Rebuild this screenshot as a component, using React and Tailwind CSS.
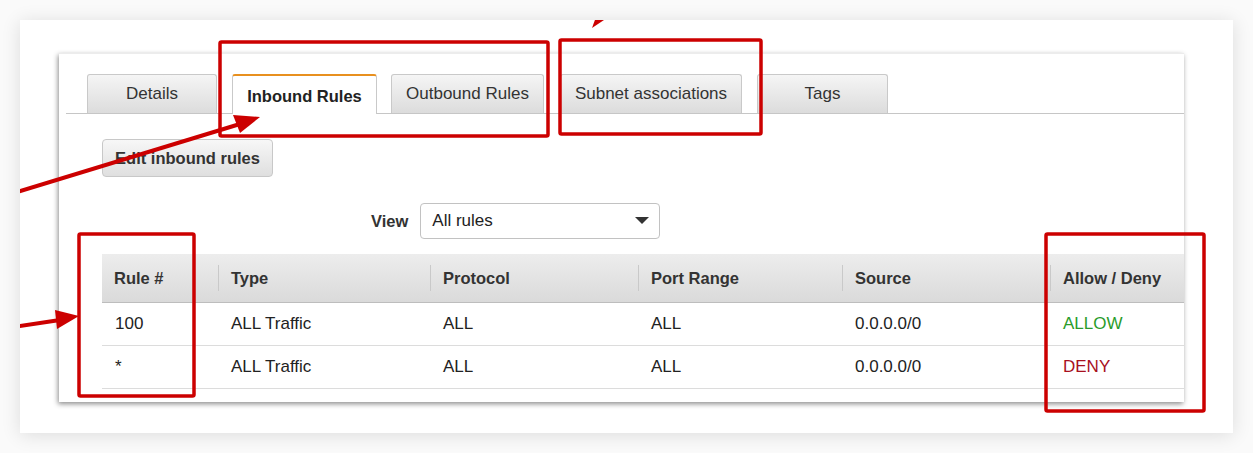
import React from "react";

const font = { fontFamily: '"Liberation Sans", Arial, Helvetica, sans-serif' };

function Tab({ label, width, active, ml }) {
  if (active) {
    return (
      <div
        className="relative -mb-px flex h-[40px] items-center justify-center rounded-t-[3px] border border-b-0 border-t-2 border-[#c9c9c9] border-t-[#e8901f] bg-white pt-[2px] text-[16.5px] font-bold text-[#222]"
        style={{ width, marginLeft: ml }}
      >
        {label}
      </div>
    );
  }
  return (
    <div
      className="flex h-[39px] items-center justify-center rounded-t-[3px] border border-b-0 border-[#c9c9c9] bg-gradient-to-b from-[#f5f5f5] to-[#dcdcdc] text-[17px] text-[#333]"
      style={{ width, marginLeft: ml }}
    >
      {label}
    </div>
  );
}

const cols = [
  { label: "Rule #", w: 116 },
  { label: "Type", w: 212 },
  { label: "Protocol", w: 208 },
  { label: "Port Range", w: 204 },
  { label: "Source", w: 208 },
  { label: "Allow / Deny", w: 134 },
];

const rows = [
  ["100", "ALL Traffic", "ALL", "ALL", "0.0.0.0/0", "ALLOW"],
  ["*", "ALL Traffic", "ALL", "ALL", "0.0.0.0/0", "DENY"],
];

export default function App() {
  return (
    <div className="relative h-[453px] w-[1253px] overflow-hidden bg-[#fafafa] p-[20px]" style={font}>
      <div className="relative h-[413px] w-[1213px] overflow-hidden bg-white pl-[39px] pt-[33px] shadow-[0_2px_18px_rgba(0,0,0,0.12)]">
        {/* panel */}
        <div className="flex h-[349px] w-[1125px] flex-col border-t border-[#ececec] bg-white pt-[20px] shadow-[-1px_2px_5px_rgba(0,0,0,0.45)]">
          {/* tabs */}
          <div className="ml-[7px] flex items-end border-b border-[#c6c6c6] pl-[21px]">
            <Tab label="Details" width={130} ml={0} />
            <Tab label="Inbound Rules" width={145} ml={15} active />
            <Tab label="Outbound Rules" width={153} ml={14} />
            <Tab label="Subnet associations" width={182} ml={16} />
            <Tab label="Tags" width={131} ml={15} />
          </div>

          <div className="pl-[43px]">
            <div className="mt-[25px] flex h-[38px] w-[171px] items-center justify-center rounded-[4px] border border-[#c8c8c8] bg-gradient-to-b from-[#f7f7f7] to-[#dfdfdf] text-[16.5px] font-bold text-[#333]">
              Edit inbound rules
            </div>

            <div className="mt-[26px] flex items-center pl-[269px]">
              <span className="text-[16.5px] font-bold text-[#333]">View</span>
              <div className="ml-[12px] flex h-[36px] w-[240px] items-center justify-between rounded-[4px] border border-[#c2c2c2] bg-white pl-[11px] pr-[10px] text-[17px] text-[#222]">
                <span>All rules</span>
                <svg width="14" height="8" viewBox="0 0 14 8">
                  <path d="M0 0 L14 0 L7 7 Z" fill="#333" />
                </svg>
              </div>
            </div>

            <div className="mt-[15px] w-[1082px]">
              <div className="flex h-[49px] items-center border-b border-[#bdbdbd] bg-gradient-to-b from-[#ededed] to-[#dadada]">
                {cols.map((c, i) => (
                  <div key={c.label} className="flex h-full items-center" style={{ width: c.w }}>
                    {i > 0 && <div className="h-[26px] w-px bg-[#c9c9c9]" />}
                    <span className="pl-[12px] text-[16.5px] font-bold text-[#333]">{c.label}</span>
                  </div>
                ))}
              </div>
              {rows.map((r, ri) => (
                <div key={ri} className="flex h-[43px] items-center border-b border-[#dcdcdc]">
                  {r.map((v, i) => (
                    <div
                      key={i}
                      className={
                        "pl-[13px] text-[17px] " +
                        (i === 5 ? (v === "ALLOW" ? "text-[#2a9c2a]" : "text-[#a8101e]") : "text-[#222]")
                      }
                      style={{ width: cols[i].w }}
                    >
                      {v}
                    </div>
                  ))}
                </div>
              ))}
            </div>
          </div>
        </div>
      </div>

      {/* annotations overlay */}
      <svg className="pointer-events-none absolute left-0 top-0" width="1253" height="453" viewBox="0 0 1253 453">
        <defs>
          <clipPath id="card">
            <rect x="20" y="20" width="1213" height="413" />
          </clipPath>
        </defs>
        <g clipPath="url(#card)" fill="none" stroke="#cc0000" strokeWidth="3.5" strokeLinejoin="round">
          <rect x="220" y="42" width="328" height="94" rx="1.5" />
          <rect x="560" y="40" width="201" height="94" rx="1.5" />
          <rect x="79" y="234" width="115" height="162" rx="1.5" />
          <rect x="1046" y="234" width="158" height="177" rx="1.5" />
          <line x1="14" y1="193" x2="240" y2="124" strokeWidth="4" />
          <line x1="14" y1="327" x2="60" y2="320" strokeWidth="4" />
        </g>
        <g clipPath="url(#card)" fill="#cc0000">
          <polygon points="260,117 233,115 240,133" />
          <polygon points="79,316 55,310 57,329" />
          <polygon points="592,28 607,18 596,17" />
        </g>
      </svg>
    </div>
  );
}
